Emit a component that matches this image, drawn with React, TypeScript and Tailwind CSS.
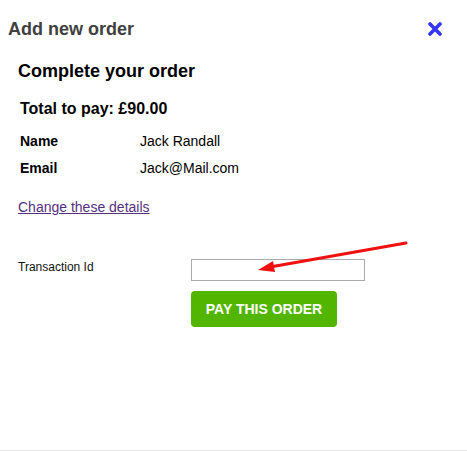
import React from "react";

function CloseIcon(): React.JSX.Element {
  return (
    <svg width="14" height="14" viewBox="0 0 14 14" aria-hidden="true">
      <path d="M2 2 L12 12 M12 2 L2 12" stroke="#3535f2" strokeWidth="3.6" strokeLinecap="round" />
    </svg>
  );
}

function Arrow(): React.JSX.Element {
  return (
    <svg className="pointer-events-none absolute left-0 top-0" width="467" height="451" aria-hidden="true">
      <line x1="406" y1="243" x2="270" y2="267" stroke="#f01010" strokeWidth="3" strokeLinecap="round" />
      <polygon points="258,270 273,261 275,272" fill="#f01010" />
    </svg>
  );
}

export default function App(): React.JSX.Element {
  return (
    <div className="relative h-[451px] w-[467px] overflow-hidden border-b border-[#e6e6e6] bg-white font-['Liberation_Sans',Arial,sans-serif] text-black">
      <header className="flex items-start justify-between pl-2 pr-[25px] pt-[19px]">
        <h1 className="text-[18px] font-bold leading-[20px] text-[#404040]">Add new order</h1>
        <button type="button" className="mt-[3px]">
          <CloseIcon />
        </button>
      </header>

      <div className="pl-[18px]">
        <h2 className="mt-5 text-[18px] font-bold leading-[24px]">Complete your order</h2>
        <p className="mt-4 pl-[2px] text-[16px] font-bold leading-[20px]">Total to pay: £90.00</p>

        <div className="mt-[9px] grid grid-cols-[120px_1fr] pl-[2px] text-[14px] leading-[27px]">
          <span className="font-bold">Name</span>
          <span>Jack Randall</span>
          <span className="font-bold">Email</span>
          <span>Jack@Mail.com</span>
        </div>

        <a href="#" className="mt-[15px] block text-[14px] leading-[20px] text-[#55307f] underline">
          Change these details
        </a>

        <div className="mt-[42px] flex items-start">
          <label className="mt-px w-[173px] text-[12px] leading-[14px] text-[#111]">Transaction Id</label>
          <div className="flex flex-col">
            <input type="text" className="h-[22px] w-[174px] border border-[#aaaaaa] bg-white outline-none" />
            <button
              type="button"
              className="mt-[10px] h-[36px] w-[146px] rounded-[4px] bg-[#52b500] text-[14px] font-bold text-white"
            >
              PAY THIS ORDER
            </button>
          </div>
        </div>
      </div>

      <Arrow />
    </div>
  );
}
